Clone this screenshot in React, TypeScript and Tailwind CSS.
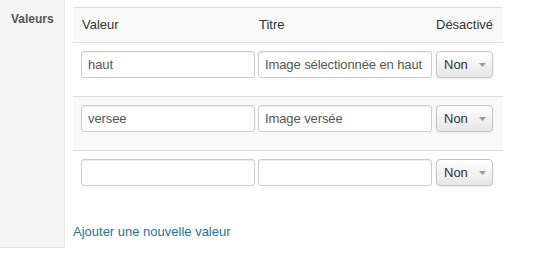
import React from "react";

type Row = { value: string; title: string };

const rows: Row[] = [
  { value: "haut", title: "Image sélectionnée en haut" },
  { value: "versee", title: "Image versée" },
  { value: "", title: "" },
];

const inputClass =
  "h-[27px] w-[174px] rounded-[3px] border border-[#cccccc] bg-white px-[6px] text-[13px] tracking-[-0.1px] text-[#555] shadow-[inset_0_1px_1px_rgba(0,0,0,0.075)] outline-none";

const NonSelect = () => (
  <div className="flex h-[27px] w-[57px] items-center rounded-[4px] border border-[#c5c5c5] bg-gradient-to-b from-white to-[#e6e6e6] pl-[7px] text-[13px] text-[#333] shadow-[0_1px_2px_rgba(0,0,0,0.08)]">
    <span>Non</span>
    <svg className="ml-[11px]" width="7" height="4" viewBox="0 0 7 4">
      <path d="M0 0 L7 0 L3.5 4 Z" fill="#999999" />
    </svg>
  </div>
);

const App = () => {
  return (
    <div className="flex h-[267px] w-[533px] bg-white font-['Liberation_Sans',Arial,sans-serif]">
      <div className="h-[248px] w-[65px] border-r border-b border-[#e6e6e6] bg-[#f4f4f4] pl-[11px] pt-[10px] text-[12px] font-bold text-[#555]">
        Valeurs
      </div>
      <div className="pl-[8px] pt-[7px]">
        <div className="w-[430px]">
          <div className="grid h-[36px] grid-cols-[174px_174px_57px] items-center gap-x-[3px] border-y border-[#dddddd] bg-[#f9f9f9] pl-[9px] text-[13px] text-[#333]">
            <span>Valeur</span>
            <span>Titre</span>
            <span>Désactivé</span>
          </div>
          {rows.map((row, i) => (
            <div
              key={i}
              className={
                "grid grid-cols-[174px_174px_57px] gap-x-[3px] pb-[18px] pl-[8px] pt-[8px] " +
                (i < rows.length - 1 ? "border-b border-[#dddddd] " : "") +
                (i % 2 === 1 ? "bg-[#f9f9f9]" : "bg-white")
              }
            >
              <input className={inputClass} defaultValue={row.value} />
              <input className={inputClass} defaultValue={row.title} />
              <div className="pl-[1px]">
                <NonSelect />
              </div>
            </div>
          ))}
        </div>
        <a href="#" className="mt-[18px] block text-[13px] text-[#21759b]">
          Ajouter une nouvelle valeur
        </a>
      </div>
    </div>
  );
};

export default App;
